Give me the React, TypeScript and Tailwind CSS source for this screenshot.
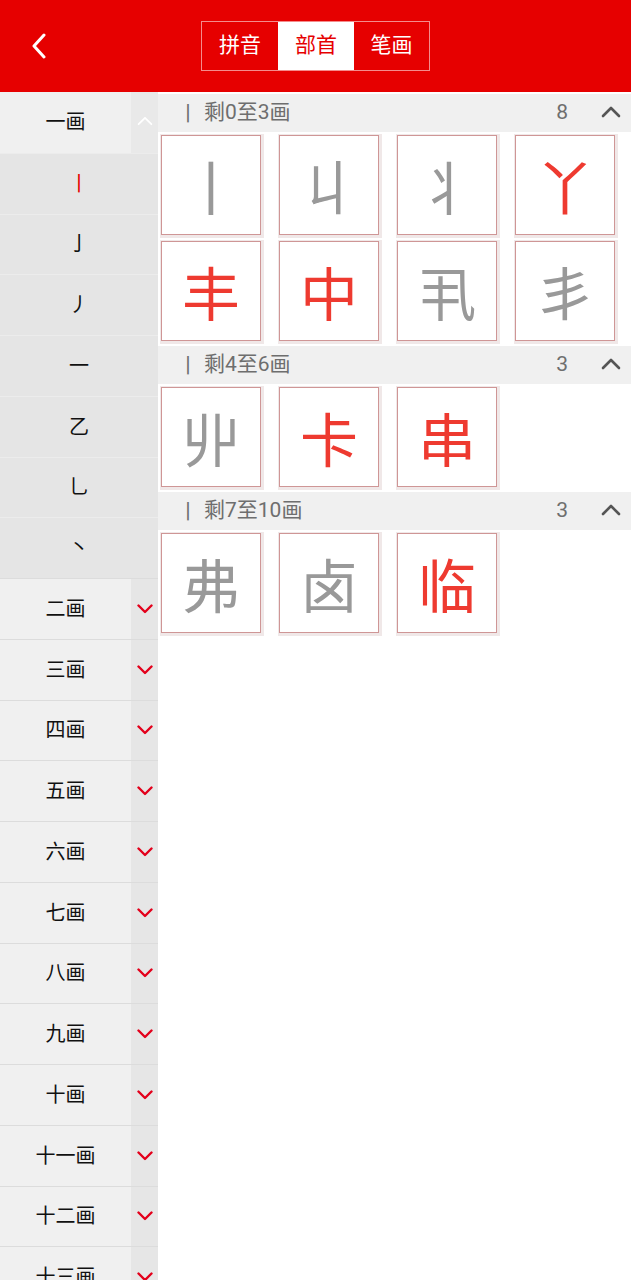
import React from "react";

const FONT = { fontFamily: 'Roboto, "Noto Sans CJK SC", "Noto Sans", sans-serif' };
const CJK = { fontFamily: '"Noto Sans CJK SC", sans-serif' };

function ChevronDown({ color = "#e3001b" }: { color?: string }) {
  return (
    <svg width="16" height="10" viewBox="0 0 16 10" fill="none">
      <polyline points="1.5,1.5 8,8 14.5,1.5" stroke={color} strokeWidth="2.4" strokeLinecap="round" strokeLinejoin="round" />
    </svg>
  );
}

function ChevronUp({ color = "#555", w = 20, h = 12, sw = 2.6 }: { color?: string; w?: number; h?: number; sw?: number }) {
  return (
    <svg width={w} height={h} viewBox="0 0 20 12" fill="none">
      <polyline points="2,10 10,2 18,10" stroke={color} strokeWidth={sw} strokeLinecap="round" strokeLinejoin="round" />
    </svg>
  );
}

type Ch = { c: string; red?: boolean };

const sections: { title: string; count: number; chars: Ch[] }[] = [
  {
    title: "剩0至3画",
    count: 8,
    chars: [
      { c: "丨" },
      { c: "丩" },
      { c: "丬" },
      { c: "丫", red: true },
      { c: "丰", red: true },
      { c: "中", red: true },
      { c: "丮" },
      { c: "丯" },
    ],
  },
  {
    title: "剩4至6画",
    count: 3,
    chars: [{ c: "丱" }, { c: "卡", red: true }, { c: "串", red: true }],
  },
  {
    title: "剩7至10画",
    count: 3,
    chars: [{ c: "弗" }, { c: "卤" }, { c: "临", red: true }],
  },
];

const subItems = ["丨", "亅", "丿", "一", "乙", "乚", "丶"];
const groups = ["二画", "三画", "四画", "五画", "六画", "七画", "八画", "九画", "十画", "十一画", "十二画", "十三画"];

export default function App() {
  return (
    <div className="w-[631px] h-[1280px] overflow-hidden bg-white flex flex-col" style={FONT}>
      {/* Header */}
      <div className="h-[92px] shrink-0 bg-[#e60000] grid grid-cols-[1fr_auto_1fr] items-center">
        <div className="pl-[31px] flex items-center">
          <svg width="16" height="26" viewBox="0 0 16 26" fill="none">
            <polyline points="13,2 3,13 13,24" stroke="#fff" strokeWidth="3" strokeLinecap="round" strokeLinejoin="round" />
          </svg>
        </div>
        <div className="flex h-[50px] border border-[#f48c8c] text-[21px]">
          <div className="w-[76px] flex items-center justify-center text-white">拼音</div>
          <div className="w-[76px] flex items-center justify-center bg-white text-[#e60000]">部首</div>
          <div className="w-[75px] flex items-center justify-center text-white">笔画</div>
        </div>
        <div />
      </div>

      <div className="flex flex-1 min-h-0">
        {/* Left column */}
        <div className="w-[158px] shrink-0 flex flex-col">
          <div className="h-[60.75px] shrink-0 flex bg-[#f0f0f0]">
            <div className="flex-1 flex items-center justify-center text-[20px] text-[#111]">一画</div>
            <div className="w-[27px] bg-[#e9e9e9] flex items-center justify-center pb-[2px]">
              <ChevronUp color="#ffffff" w={16} h={10} sw={2.2} />
            </div>
          </div>
          {subItems.map((s, i) => (
            <div
              key={s}
              className={`h-[60.75px] shrink-0 flex items-center justify-center bg-[#e5e5e5] border-t border-[#ececec] text-[20px] ${i === 0 ? "text-[#e60000]" : "text-[#111]"}`}
            >
              {s}
            </div>
          ))}
          {groups.map((g) => (
            <div key={g} className="h-[60.75px] shrink-0 flex border-t border-[#dcdcdc] bg-[#f0f0f0]">
              <div className="flex-1 flex items-center justify-center text-[20px] text-[#111]">{g}</div>
              <div className="w-[27px] bg-[#e6e6e6] flex items-center justify-center">
                <ChevronDown />
              </div>
            </div>
          ))}
        </div>

        {/* Main */}
        <div className="flex-1 flex flex-col pt-[2px]">
          {sections.map((sec) => (
            <div key={sec.title} className="flex flex-col">
              <div className="h-[38px] bg-[#f0f0f0] flex items-center text-[21px] text-[#6e6e6e]">
                <span className="ml-[20px] mr-[6px] text-[20px]" style={CJK}>丨</span>
                <span>{sec.title}</span>
                <span className="ml-auto mr-[33px] text-[21px]">{sec.count}</span>
                <span className="mr-[10px] mb-[2px]">
                  <ChevronUp />
                </span>
              </div>
              <div className="grid grid-cols-[100px_100px_100px_100px] gap-x-[18px] gap-y-[6px] pl-[3px] pt-[3px] pb-[5px]">
                {sec.chars.map((ch, i) => (
                  <div
                    key={i}
                    className="h-[100px] bg-white border border-[#cf9696] shadow-[1px_1px_0_2px_#f0e8e8] flex items-center justify-center"
                  >
                    <span className={`text-[58px] leading-none ${ch.red ? "text-[#ee3a30]" : "text-[#999999]"}`} style={CJK}>{ch.c}</span>
                  </div>
                ))}
              </div>
            </div>
          ))}
        </div>
      </div>
    </div>
  );
}
